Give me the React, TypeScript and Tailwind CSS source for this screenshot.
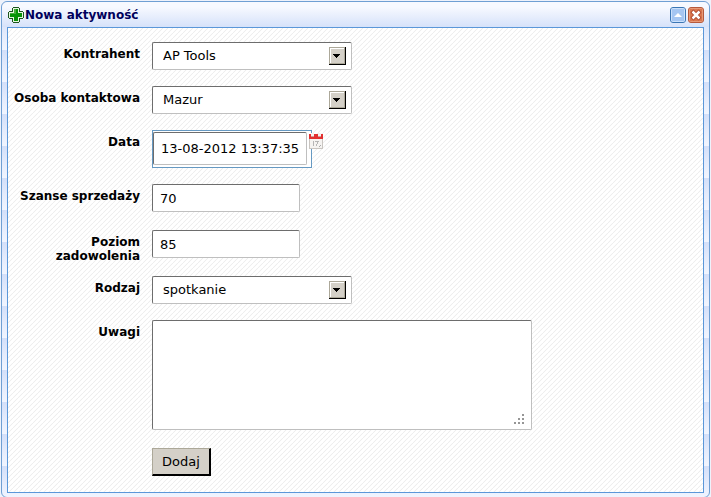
import type { ReactNode } from "react";

const control =
  "border border-t-[#6d6d6d] border-l-[#6d6d6d] border-r-[#bfbfbf] border-b-[#bfbfbf] rounded-xs bg-white text-[13px] text-black outline-none";

function Row({ label, id, children }: { label: string; id: string; children: ReactNode }) {
  return (
    <div className="flex items-start gap-3">
      <label htmlFor={id} className="-mb-1 w-32 shrink-0 pt-[5px] text-right text-xs/[14px] font-bold">
        {label}
      </label>
      <div className="flex min-w-0 flex-1 items-start">{children}</div>
    </div>
  );
}

function Select({ id, value }: { id: string; value: string }) {
  return (
    <div className="relative w-[200px]">
      <select id={id} defaultValue={value} className={`${control} block h-7 w-full appearance-none pr-7 pl-2.5`}>
        <option>{value}</option>
      </select>
      <svg
        className="pointer-events-none absolute top-[5px] right-1.5"
        width="17"
        height="18"
        viewBox="0 0 17 18"
        shapeRendering="crispEdges"
        aria-hidden="true"
      >
        <rect width="17" height="18" fill="#000" />
        <rect width="16" height="17" fill="#aca899" />
        <rect x="1" y="1" width="14" height="15" fill="#fff" />
        <rect x="2" y="2" width="13" height="14" fill="#d4d0c8" />
        <path d="M4 7h7v1h-1v1H9v1H8v1H7v-1H6V9H5V8H4z" fill="#000" />
      </svg>
    </div>
  );
}

function TextInput({ id, value }: { id: string; value: string }) {
  return <input id={id} type="text" defaultValue={value} className={`${control} mb-0.5 h-7 w-[148px] px-[7px]`} />;
}

function PlusIcon() {
  return (
    <svg width="16" height="16" viewBox="0 0 16 16" shapeRendering="crispEdges" aria-hidden="true">
      <path d="M5 0h6v1h1v3h3v1h1v6h-1v1h-3v3h-1v1H5v-1H4v-3H1v-1H0V5h1V4h3V1h1z" fill="#1d551d" />
      <path d="M5 1h6v4h4v6h-4v4H5v-4H1V5h4z" fill="#e5f5df" />
      <path d="M6 2h4v4h4v4h-4v4H6v-4H2V6h4z" fill="#079207" />
      <path d="M6 2h2v5H2V6h4z" fill="#45ae3a" />
    </svg>
  );
}

function CalendarIcon() {
  return (
    <svg width="14" height="16" viewBox="0 0 14 16" shapeRendering="crispEdges" aria-hidden="true">
      <rect y="1" width="14" height="15" fill="#c9c5c1" />
      <rect x="1" y="6" width="12" height="9" fill="#f5f3f1" />
      <rect y="1" width="14" height="5" fill="#e23030" />
      <path d="M2 0h3v4H2zM9 0h3v4H9z" fill="#f6f1ee" />
      <path d="M2 3h3v1H2zM9 3h3v1H9z" fill="#d09a98" />
      <path d="M4 8h1v5H4zM6 8h4v1H9v2H8v2H7v-2h1V9H6z" fill="#b5b5b5" />
      <path d="M11 12h1v1h-1zM10 13h1v1h-1z" fill="#aaa" />
    </svg>
  );
}

export default function App() {
  return (
    <div className="flex min-h-screen flex-col bg-[#eef2fb] px-px pt-px font-['Verdana','DejaVu_Sans',sans-serif] text-black">
      <section
        aria-labelledby="window-title"
        className="flex flex-1 flex-col rounded-md border border-[#6f9fd3] bg-[repeating-linear-gradient(to_bottom,#e4ebfc_0px,#f1f5ff_16px,#d3dff9_16px,#e4ebfc_32px)] px-[5px] pb-1"
      >
        <header className="-mx-[5px] flex h-[25px] items-center rounded-t-md bg-linear-to-b from-[#f7f9ff] from-20% to-[#d6e2fa] pr-[5px] pl-[6px]">
          <PlusIcon />
          <h1 id="window-title" className="ml-px flex-1 text-xs font-bold text-[#00005c]">
            Nowa aktywność
          </h1>
          <div className="flex gap-0.5">
            <button type="button" aria-label="Zwiń">
              <svg className="block" width="16" height="16" viewBox="0 0 16 16" aria-hidden="true">
                <rect x=".5" y=".5" width="15" height="15" rx="2.5" fill="#a5c6f2" stroke="#3b76b4" />
                <rect x="1.5" y="1.5" width="13" height="13" rx="1" fill="none" stroke="#cce1fb" />
                <path d="M4 10l4-4 4 4z" fill="#fff" />
              </svg>
            </button>
            <button type="button" aria-label="Zamknij">
              <svg className="block" width="16" height="16" viewBox="0 0 16 16" aria-hidden="true">
                <rect x=".5" y=".5" width="15" height="15" rx="2.5" fill="#d9764f" stroke="#b65a3c" />
                <rect x="1.5" y="1.5" width="13" height="13" rx="1" fill="none" stroke="#e79a79" />
                <path d="M4 4l8 8M12 4l-8 8" stroke="#a73e26" strokeWidth="4" />
                <path d="M4.5 4.5l7 7M11.5 4.5l-7 7" stroke="#fff" strokeWidth="2.5" />
              </svg>
            </button>
          </div>
        </header>
        <form
          className="flex flex-1 flex-col gap-4 border border-[#5b97d9] bg-white bg-[linear-gradient(135deg,transparent_38%,#eeeeee_50%,transparent_62%)] bg-[length:5px_5px] px-1 pt-3.5 pb-4"
          onSubmit={(event) => event.preventDefault()}
        >
          <Row label="Kontrahent" id="kontrahent">
            <Select id="kontrahent" value="AP Tools" />
          </Row>
          <Row label="Osoba kontaktowa" id="osoba">
            <Select id="osoba" value="Mazur" />
          </Row>
          <Row label="Data" id="data">
            <div className="w-40 border border-[#6699c2] bg-white pt-px pr-1 pb-0.5">
              <input
                id="data"
                type="text"
                defaultValue="13-08-2012 13:37:35"
                className={`${control} block h-[33px] w-full pl-[7px]`}
              />
            </div>
            <button type="button" aria-label="Wybierz datę" className="-ml-[3px] mt-[3px]">
              <CalendarIcon />
            </button>
          </Row>
          <Row label="Szanse sprzedaży" id="szanse">
            <TextInput id="szanse" value="70" />
          </Row>
          <Row label="Poziom zadowolenia" id="poziom">
            <TextInput id="poziom" value="85" />
          </Row>
          <Row label="Rodzaj" id="rodzaj">
            <Select id="rodzaj" value="spotkanie" />
          </Row>
          <Row label="Uwagi" id="uwagi">
            <div className="relative mb-0.5 w-[380px]">
              <textarea id="uwagi" className={`${control} block h-[110px] w-full resize-none p-2`} />
              <svg
                className="pointer-events-none absolute right-2 bottom-1.5"
                width="11"
                height="11"
                viewBox="0 0 11 11"
                shapeRendering="crispEdges"
                aria-hidden="true"
              >
                <path d="M9 1h2v2H9zM5 5h2v2H5zM9 5h2v2H9zM1 9h2v2H1zM5 9h2v2H5zM9 9h2v2H9z" fill="#969696" />
              </svg>
            </div>
          </Row>
          <div className="flex pl-35">
            <button
              type="submit"
              className="h-7 w-[59px] border-r-2 border-b-2 border-l border-t border-t-[#aca899] border-l-[#aca899] border-r-black border-b-black bg-[#d4d0c8] text-[13px]"
            >
              Dodaj
            </button>
          </div>
        </form>
      </section>
    </div>
  );
}
